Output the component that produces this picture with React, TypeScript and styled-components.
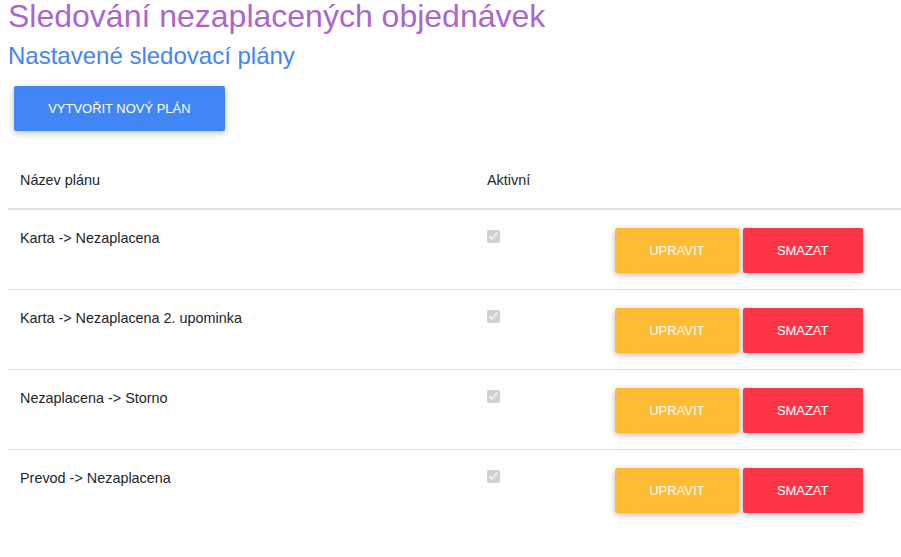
import styled, { createGlobalStyle } from "styled-components";

type Plan = { id: number; name: string; active: boolean };

const plans: Plan[] = [
  { id: 1, name: "Karta -> Nezaplacena", active: true },
  { id: 2, name: "Karta -> Nezaplacena 2. upominka", active: true },
  { id: 3, name: "Nezaplacena -> Storno", active: true },
  { id: 4, name: "Prevod -> Nezaplacena", active: true },
];

const GlobalStyle = createGlobalStyle`
  html, body {
    margin: 0;
    padding: 0;
    background: #fff;
    overflow: hidden;
  }
  body {
    font-family: "Liberation Sans", Arial, sans-serif;
    color: #212529;
  }
`;

const Page = styled.div`
  padding-left: 8px;
  padding-top: 4px;
`;

const Title = styled.h2`
  margin: 0;
  font-size: 32px;
  line-height: 24px;
  font-weight: 400;
  color: #aa66cc;
`;

const Subtitle = styled.h4`
  margin: 14px 0 9px;
  font-size: 24px;
  line-height: 28.8px;
  font-weight: 400;
  color: #4285f4;
`;

const Btn = styled.button<{ $color: string }>`
  display: inline-block;
  border: 0;
  border-radius: 2px;
  padding: 13px 34.24px;
  font-family: "Liberation Sans", Arial, sans-serif;
  font-size: 12.96px;
  line-height: 19px;
  text-transform: uppercase;
  color: #fff;
  background: ${(p) => p.$color};
  box-shadow: 0 2px 5px 0 rgba(0, 0, 0, 0.16), 0 2px 10px 0 rgba(0, 0, 0, 0.12);
  cursor: pointer;
  white-space: nowrap;
`;

const Toolbar = styled.div`
  padding: 6px;
  margin-bottom: 16px;
`;

const Table = styled.table`
  width: 893px;
  border-collapse: collapse;
  table-layout: fixed;
  font-size: 14.4px;
  line-height: 21.6px;
`;

const Th = styled.th`
  text-align: left;
  font-weight: 400;
  padding: 17.6px 12px 16px;
  border-bottom: 2px solid #dee2e6;
`;

const Row = styled.tr<{ $last?: boolean }>`
  border-bottom: ${(p) => (p.$last ? "0" : "1px solid #dee2e6")};
`;

const Td = styled.td`
  vertical-align: top;
  padding: 17.6px 12px 16.4px;
`;

const Check = styled.input`
  margin: 0 0 1px 0;
`;

const Actions = styled.div`
  display: flex;
  gap: 4px;
`;

export default function App() {
  return (
    <Page>
      <GlobalStyle />
      <Title>Sledování nezaplacených objednávek</Title>
      <Subtitle>Nastavené sledovací plány</Subtitle>
      <Toolbar>
        <Btn $color="#4285f4">Vytvořit nový plán</Btn>
      </Toolbar>
      <Table>
        <colgroup>
          <col style={{ width: 467 }} />
          <col style={{ width: 128 }} />
          <col />
        </colgroup>
        <thead>
          <tr>
            <Th>Název plánu</Th>
            <Th>Aktivní</Th>
            <Th></Th>
          </tr>
        </thead>
        <tbody>
          {plans.map((plan, i) => (
            <Row key={plan.id} $last={i === plans.length - 1}>
              <Td>{plan.name}</Td>
              <Td>
                <Check type="checkbox" checked={plan.active} disabled readOnly />
              </Td>
              <Td>
                <Actions>
                  <Btn $color="#ffbb33">Upravit</Btn>
                  <Btn $color="#ff3547">Smazat</Btn>
                </Actions>
              </Td>
            </Row>
          ))}
        </tbody>
      </Table>
    </Page>
  );
}
